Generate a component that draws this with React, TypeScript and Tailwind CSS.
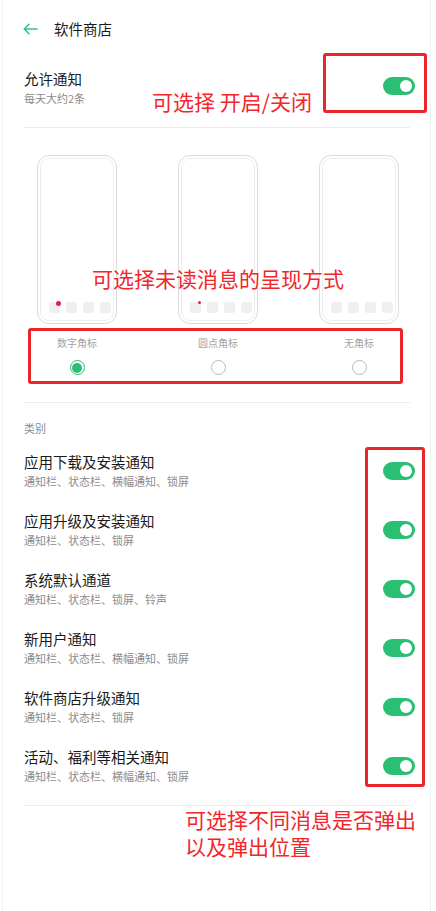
const GREEN = "bg-[#2bbf73]";

const categories = [
  { title: "应用下载及安装通知", sub: "通知栏、状态栏、横幅通知、锁屏" },
  { title: "应用升级及安装通知", sub: "通知栏、状态栏、锁屏" },
  { title: "系统默认通道", sub: "通知栏、状态栏、锁屏、铃声" },
  { title: "新用户通知", sub: "通知栏、状态栏、横幅通知、锁屏" },
  { title: "软件商店升级通知", sub: "通知栏、状态栏、锁屏" },
  { title: "活动、福利等相关通知", sub: "通知栏、状态栏、横幅通知、锁屏" },
];

const badges = [
  { label: "数字角标", kind: "number" },
  { label: "圆点角标", kind: "dot" },
  { label: "无角标", kind: "none" },
];

function Toggle() {
  return (
    <div className={`w-8 h-[18px] rounded-full ${GREEN} flex items-center justify-end pr-[3px] shrink-0`}>
      <div className="w-[12px] h-[12px] rounded-full bg-white" />
    </div>
  );
}

function Phone({ kind }: { kind: string }) {
  return (
    <div className="w-[80px] h-[169px] rounded-[12px] border border-[#dcdcdc] shadow-[inset_0_0_0_2px_#fff,inset_0_0_0_3px_#ededed] flex items-end px-[11px] pb-[10px]">
      <div className="flex gap-[6px]">
        {[0, 1, 2, 3].map((i) => (
          <div key={i} className="relative w-[11px] h-[11px] rounded-[2px] bg-[#efefef]">
            {i === 0 && kind === "number" && (
              <div className="absolute -top-[1px] left-[7px] w-[5px] h-[5px] rounded-full bg-[#d92450]" />
            )}
            {i === 0 && kind === "dot" && (
              <div className="absolute -top-[1px] left-[8px] w-[3px] h-[3px] rounded-full bg-[#d92450]" />
            )}
          </div>
        ))}
      </div>
    </div>
  );
}

function Radio({ on }: { on: boolean }) {
  if (on) {
    return (
      <div className="w-[15px] h-[15px] rounded-full border-[1.5px] border-[#2bbf73] p-[1.5px]">
        <div className={`w-full h-full rounded-full ${GREEN}`} />
      </div>
    );
  }
  return <div className="w-[15px] h-[15px] rounded-full border border-[#b8b8b8]" />;
}

export default function App() {
  return (
    <div
      className="relative w-[436px] h-[911px] bg-white overflow-hidden"
      style={{ fontFamily: '"Noto Sans CJK SC", "Noto Sans", sans-serif' }}
    >
      <div className="ml-[2px] w-[429px] h-full border-x border-[#f0f0f0]">
        {/* Header */}
        <div className="h-[58px] flex items-center pl-[20px]">
          <svg width="15" height="12" viewBox="0 0 15 12" fill="none">
            <path d="M14 6H1.5M6 1.2 1.2 6 6 10.8" stroke="#33c482" strokeWidth="1.5" strokeLinecap="round" strokeLinejoin="round" />
          </svg>
          <span className="ml-[16px] text-[14.5px] leading-5 text-[#1a1a1a]">软件商店</span>
        </div>

        {/* Allow notifications */}
        <div className="h-[69px] flex items-start justify-between pl-[21px] pr-[15px] pt-[11px]">
          <div className="flex flex-col">
            <span className="text-[14.5px] leading-5 text-[#1a1a1a]">允许通知</span>
            <span className="mt-[2px] text-[11px] leading-[15px] text-[#8c8c8c]">每天大约2条</span>
          </div>
          <div className="mt-[8px]">
            <Toggle />
          </div>
        </div>
        <div className="mx-[20px] h-px bg-[#ececec]" />

        {/* Badge style */}
        <div className="pt-[27px] flex justify-center gap-[61px] pl-[3px]">
          {badges.map((b, i) => (
            <div key={b.label} className="w-[80px] flex flex-col items-center">
              <Phone kind={b.kind} />
              <span className="mt-[12px] text-[10px] leading-[14px] text-[#a3a3a3] whitespace-nowrap">{b.label}</span>
              <div className="mt-[10px]">
                <Radio on={i === 0} />
              </div>
            </div>
          ))}
        </div>
        <div className="mt-[27px] mx-[20px] h-px bg-[#ececec]" />

        {/* Categories */}
        <div className="pt-[18px] pl-[21px] text-[11px] leading-[15px] text-[#8c8c8c]">类别</div>
        <div className="mt-[5px]">
          {categories.map((c) => (
            <div key={c.title} className="h-[59px] flex items-center justify-between pl-[21px] pr-[15px]">
              <div className="flex flex-col">
                <span className="text-[14.5px] leading-5 text-[#1a1a1a]">{c.title}</span>
                <span className="mt-[2px] text-[11px] leading-[15px] text-[#8c8c8c]">{c.sub}</span>
              </div>
              <Toggle />
            </div>
          ))}
        </div>
        <div className="mt-[10px] mx-[20px] h-px bg-[#ececec]" />
      </div>

      {/* Annotations */}
      <div className="absolute left-[323px] top-[53px] w-[104px] h-[60px] border-[3px] border-[#e8262b] rounded-[3px]" />
      <div className="absolute left-[152px] top-[87px] text-[21px] leading-7 text-[#f2262b] whitespace-nowrap">可选择 开启/关闭</div>
      <div className="absolute left-[92px] top-[264px] text-[21px] leading-7 text-[#f2262b] whitespace-nowrap">可选择未读消息的呈现方式</div>
      <div className="absolute left-[28px] top-[328px] w-[375px] h-[56px] border-[3px] border-[#e8262b] rounded-[3px]" />
      <div className="absolute left-[365px] top-[447px] w-[60px] h-[340px] border-[3px] border-[#e8262b] rounded-[3px]" />
      <div className="absolute left-[185px] top-[806px] text-[21px] leading-[27px] text-[#f2262b]">
        可选择不同消息是否弹出
        <br />
        以及弹出位置
      </div>
    </div>
  );
}
